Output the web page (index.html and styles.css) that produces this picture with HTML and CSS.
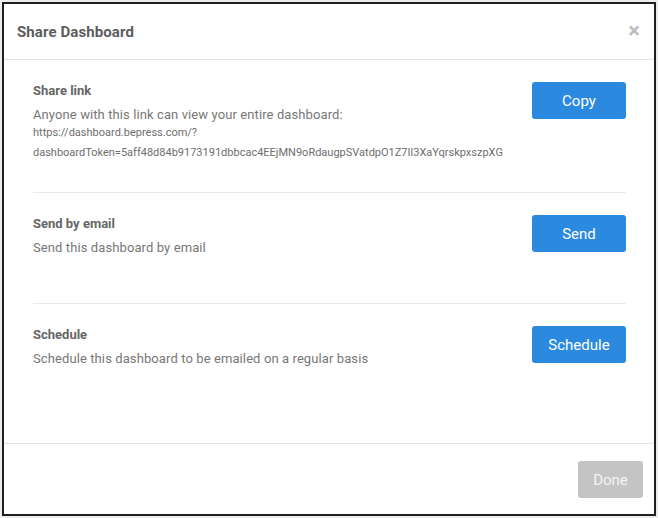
FILE: index.html
```html
<!DOCTYPE html>
<html lang="en">
<head>
    <meta charset="UTF-8">
    <meta name="viewport" content="width=device-width, initial-scale=1.0">
    <title>Share Dashboard</title>
    <link rel="stylesheet" href="styles.css">
</head>
<body>

    <div class="share-modal">
        <div class="modal-header">
            <h2 class="modal-title">Share Dashboard</h2>
            <span class="close-button">&times;</span>
        </div>

        <div class="modal-body">
            <div class="share-row">
                <div class="share-text">
                    <h3>Share link</h3>
                    <p>Anyone with this link can view your entire dashboard:</p>
                    <div class="share-url">https://dashboard.bepress.com/?<br>dashboardToken=5aff48d84b9173191dbbcac4EEjMN9oRdaugpSVatdpO1Z7Il3XaYqrskpxszpXG</div>
                </div>
                <button class="action-button">Copy</button>
            </div>

            <div class="share-row">
                <div class="share-text">
                    <h3>Send by email</h3>
                    <p>Send this dashboard by email</p>
                </div>
                <button class="action-button">Send</button>
            </div>

            <div class="share-row">
                <div class="share-text">
                    <h3>Schedule</h3>
                    <p>Schedule this dashboard to be emailed on a regular basis</p>
                </div>
                <button class="action-button">Schedule</button>
            </div>
        </div>

        <div class="modal-footer">
            <button class="done-button" disabled>Done</button>
        </div>
    </div>

</body>
</html>
```

FILE: styles.css
```css
body { font-family: Roboto, "Noto Sans", Arial, sans-serif; background-color: #ececec; margin: 0; }
.share-modal { margin: 2px; width: 650px; height: 510px; border: 2px solid #1f1f1f; background-color: #fff; display: flex; flex-direction: column; }
.modal-header { height: 55px; border-bottom: 1px solid #e3e3e3; display: flex; align-items: center; justify-content: space-between; padding: 0 14px 0 13px; }
.modal-title { margin: 0; font-size: 15px; font-weight: 700; color: #5c5c5c; letter-spacing: 0.1px; }
.close-button { font-size: 22px; font-weight: 700; color: #bdbdbd; line-height: 1; margin-top: -2px; cursor: pointer; }
.modal-body { flex: 1; padding: 0 28px 0 29px; }
.share-row { display: flex; justify-content: space-between; align-items: flex-start; padding: 22px 0 29px 0; border-bottom: 1px solid #e8e8e8; }
.share-row:last-child { border-bottom: none; }
.share-text { min-height: 59px; }
.share-text h3 { margin: 0; font-size: 13px; line-height: 18px; font-weight: 700; color: #666; }
.share-text p { margin: 7px 0 0 0; font-size: 13px; line-height: 16px; color: #777; letter-spacing: 0.1px; }
.share-url { font-size: 11px; line-height: 20px; color: #6e6e6e; }
.action-button { width: 94px; height: 37px; border: none; border-radius: 3px; background-color: #2b8ae0; color: #fff; font-family: inherit; font-size: 15px; cursor: pointer; flex-shrink: 0; }
.modal-footer { border-top: 1px solid #e3e3e3; display: flex; justify-content: flex-end; padding: 17px 11px 16px 0; }
.done-button { width: 65px; height: 37px; border: none; border-radius: 3px; background-color: #c4c4c4; color: #f4f4f4; font-family: inherit; font-size: 15px; }
```
